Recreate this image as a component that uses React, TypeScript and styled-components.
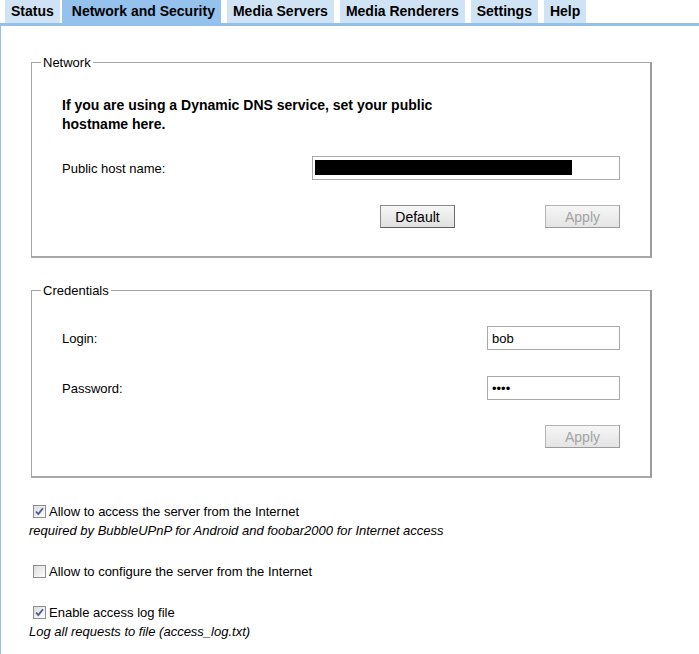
import styled, { createGlobalStyle } from 'styled-components';

const GlobalStyle = createGlobalStyle`
  html, body {
    margin: 0;
    padding: 0;
    background: #ffffff;
  }
  body {
    font-family: "Liberation Sans", Arial, sans-serif;
    font-size: 13px;
    color: #000;
  }
`;

const Page = styled.div`
  min-height: 654px;
  display: flex;
  flex-direction: column;
`;

const TabBar = styled.nav`
  display: flex;
  gap: 6px;
  padding-left: 5px;
  border-bottom: 3px solid #94c1ec;
`;

const Tab = styled.div<{ $active?: boolean }>`
  height: 23px;
  line-height: 23px;
  padding-left: ${(p) => (p.$active ? '10px' : '6px')};
  padding-right: 6px;
  margin-left: ${(p) => (p.$active ? '-4px' : '0')};
  font-weight: bold;
  font-size: 14px;
  white-space: nowrap;
  background: ${(p) => (p.$active ? '#94c2ed' : '#d0e3f5')};
`;

const Panel = styled.main`
  flex: 1;
  border-left: 1px solid #94c1ec;
  padding: 29px 0 0 28px;
`;

const Group = styled.fieldset<{ $after: number }>`
  width: 621px;
  box-sizing: border-box;
  margin: 0 2px ${(p) => p.$after}px;
  padding: 0 30px 28px 30px;
  border: 1px solid #a6a6a6;
  border-right-width: 2px;
  border-bottom-width: 2px;
  border-right-color: #9c9c9c;
  border-bottom-color: #a8a8a8;
`;

const Legend = styled.legend`
  padding: 0 2px;
  margin-left: -21px;
  font-size: 13px;
  line-height: 15px;
`;

const Intro = styled.p`
  margin: 26px 0 0;
  font-weight: bold;
  font-size: 14px;
  line-height: 19px;
  width: 400px;
`;

const FieldRow = styled.div<{ $top: number }>`
  display: flex;
  align-items: center;
  justify-content: space-between;
  margin-top: ${(p) => p.$top}px;
`;

const Label = styled.label`
  font-size: 13px;
`;

const HostField = styled.div`
  width: 308px;
  height: 24px;
  box-sizing: border-box;
  border: 1px solid #a9a9a9;
  padding: 3px 0 0 2px;
`;

const Redacted = styled.div`
  width: 257px;
  height: 15px;
  background: #000;
`;

const TextInput = styled.input`
  width: 133px;
  height: 24px;
  box-sizing: border-box;
  border: 1px solid #a9a9a9;
  padding: 0 4px;
  font-family: "Liberation Sans", Arial, sans-serif;
  font-size: 13px;
  color: #000;
  outline: none;
`;

const ButtonRow = styled.div<{ $top: number }>`
  display: flex;
  justify-content: flex-end;
  gap: 90px;
  margin-top: ${(p) => p.$top}px;
`;

const Button = styled.button`
  width: 75px;
  height: 23px;
  box-sizing: border-box;
  padding: 0;
  border: 1px solid #8a8a8a;
  border-right-color: #6a6a6a;
  border-bottom-color: #5f5f5f;
  background: linear-gradient(#f6f6f6, #e0e0e0);
  font-family: "Liberation Sans", Arial, sans-serif;
  font-size: 14px;
  color: #000;

  &:disabled {
    color: #a3a3a3;
    border-color: #b5b5b5;
    border-right-color: #9a9a9a;
    border-bottom-color: #9a9a9a;
    background: linear-gradient(#f6f6f6, #e4e4e4);
  }
`;

const Option = styled.div`
  margin: 0 0 22px;
  font-size: 13px;
  line-height: 19px;
`;

const CheckLine = styled.label`
  display: flex;
  align-items: center;
`;

const Box = styled.span`
  width: 13px;
  height: 13px;
  box-sizing: border-box;
  margin: 0 3px 0 4px;
  border: 1px solid #8e8f8f;
  background: linear-gradient(135deg, #dcdcdc, #ffffff);
  display: inline-flex;
  align-items: center;
  justify-content: center;
`;

const Hint = styled.div`
  font-style: italic;
`;

function Check({ checked }: { checked?: boolean }) {
  return (
    <Box>
      {checked && (
        <svg width="9" height="9" viewBox="0 0 9 9">
          <path d="M1 4.5 L3.3 7 L8 1.2" fill="none" stroke="#4a5e93" strokeWidth="1.8" />
        </svg>
      )}
    </Box>
  );
}

const tabs = ['Status', 'Network and Security', 'Media Servers', 'Media Renderers', 'Settings', 'Help'];

export default function App() {
  return (
    <Page>
      <GlobalStyle />
      <TabBar>
        {tabs.map((t) => (
          <Tab key={t} $active={t === 'Network and Security'}>
            {t}
          </Tab>
        ))}
      </TabBar>
      <Panel>
        <Group $after={25}>
          <Legend>Network</Legend>
          <Intro>If you are using a Dynamic DNS service, set your public hostname here.</Intro>
          <FieldRow $top={22}>
            <Label>Public host name:</Label>
            <HostField>
              <Redacted />
            </HostField>
          </FieldRow>
          <ButtonRow $top={25}>
            <Button>Default</Button>
            <Button disabled>Apply</Button>
          </ButtonRow>
        </Group>

        <Group $after={24}>
          <Legend>Credentials</Legend>
          <FieldRow $top={28}>
            <Label>Login:</Label>
            <TextInput defaultValue="bob" />
          </FieldRow>
          <FieldRow $top={26}>
            <Label>Password:</Label>
            <TextInput type="password" defaultValue="abcd" />
          </FieldRow>
          <ButtonRow $top={25}>
            <Button disabled>Apply</Button>
          </ButtonRow>
        </Group>

        <Option>
          <CheckLine>
            <Check checked />
            Allow to access the server from the Internet
          </CheckLine>
          <Hint>required by BubbleUPnP for Android and foobar2000 for Internet access</Hint>
        </Option>
        <Option>
          <CheckLine>
            <Check />
            Allow to configure the server from the Internet
          </CheckLine>
        </Option>
        <Option>
          <CheckLine>
            <Check checked />
            Enable access log file
          </CheckLine>
          <Hint>Log all requests to file (access_log.txt)</Hint>
        </Option>
      </Panel>
    </Page>
  );
}
